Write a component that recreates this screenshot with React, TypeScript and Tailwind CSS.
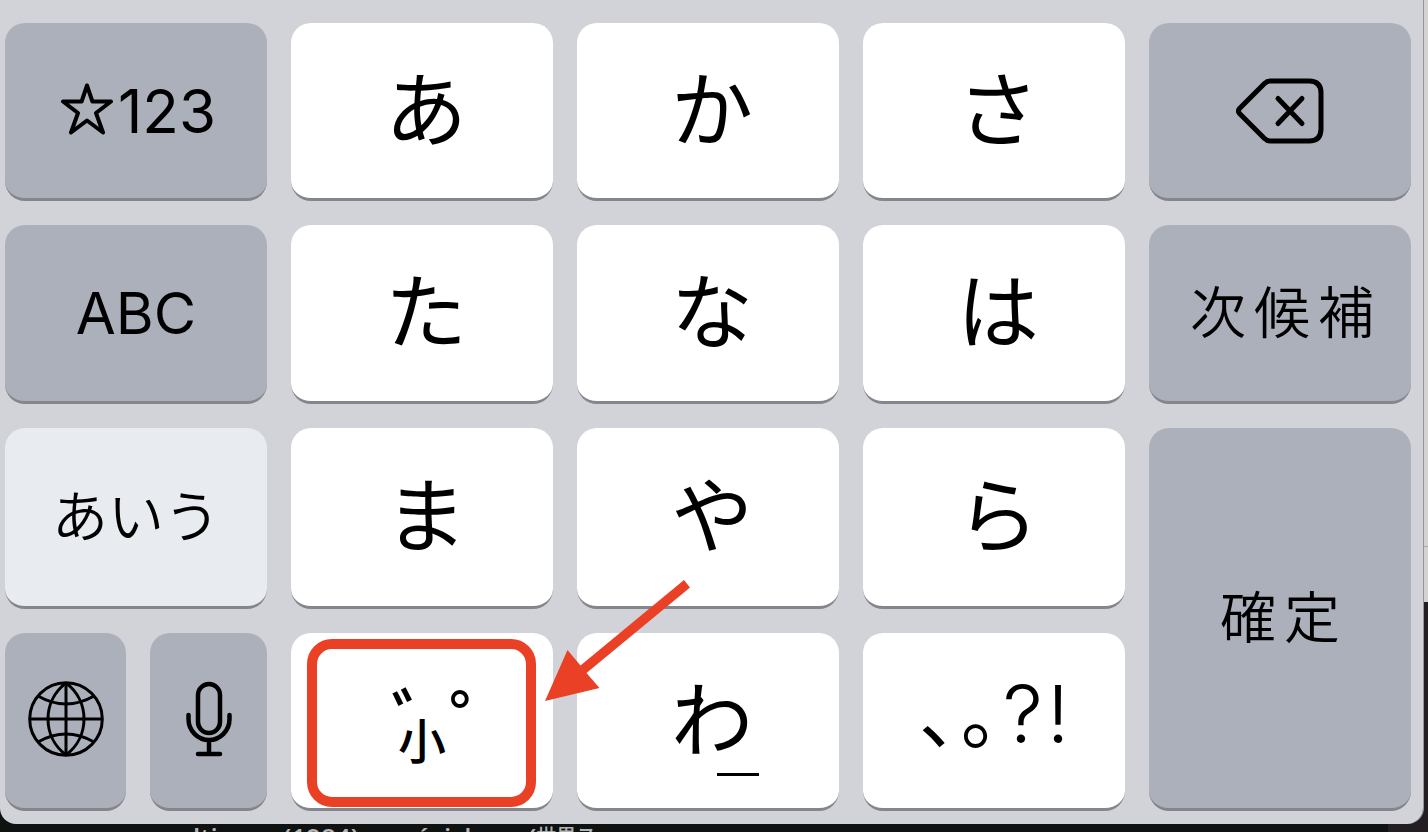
import type { ReactNode } from "react";

type KeyProps = {
  label: string;
  tone?: "white" | "gray" | "pale";
  className?: string;
  children: ReactNode;
};

const tones = {
  white: "bg-white",
  gray: "bg-[#acb0bb]",
  pale: "bg-[#e8ebf0]",
};

function Key({ label, tone = "white", className = "", children }: KeyProps) {
  return (
    <button
      type="button"
      aria-label={label}
      className={`flex min-w-0 items-center justify-center rounded-[20px] border-b-3 border-[#85868b] text-black ${tones[tone]} ${className}`}
    >
      {children}
    </button>
  );
}

function Kana({ char }: { char: string }) {
  return (
    <Key label={char}>
      <span className="pb-3 pl-2 text-[82px] leading-none">{char}</span>
    </Key>
  );
}

function StarIcon() {
  return (
    <svg viewBox="0 0 54 52" className="mb-1 h-[52px] w-[54px]" fill="none" stroke="currentColor" strokeWidth="4" strokeLinejoin="round" aria-hidden="true">
      <path d="M27 2.500 L32.400 18.500 H51 L36 30 L43 49.500 L27 37.500 L11 49.500 L18 30 L3 18.500 H21.600 Z" />
    </svg>
  );
}

function DeleteIcon() {
  return (
    <svg viewBox="0 0 88 66" className="h-[66px] w-[88px]" fill="none" stroke="currentColor" strokeLinecap="round" strokeLinejoin="round" aria-hidden="true">
      <path d="M34 3 H73 Q85 3 85 15 V51 Q85 63 73 63 H34 Q31 63 28.500 60.500 L3.500 35.500 Q1.500 33 3.500 30.500 L28.500 5.500 Q31 3 34 3 Z" strokeWidth="5" />
      <path d="M42 20.500 L66 45.500 M66 20.500 L42 45.500" strokeWidth="5" />
    </svg>
  );
}

function GlobeIcon() {
  return (
    <svg viewBox="0 0 76 76" className="mb-1 h-[76px] w-[76px]" fill="none" stroke="currentColor" strokeWidth="3" aria-hidden="true">
      <circle cx="38" cy="38" r="36.300" />
      <path d="M38 2 V74 M2 38 H74" />
      <path d="M38 2 C14 20 14 56 38 74 M38 2 C62 20 62 56 38 74" />
      <path d="M10 15 Q38 31 66 15 M10 61 Q38 45 66 61" />
    </svg>
  );
}

function MicIcon() {
  return (
    <svg viewBox="0 0 46 76" className="mb-1 h-[76px] w-[46px]" fill="none" stroke="currentColor" strokeWidth="4.500" strokeLinecap="round" aria-hidden="true">
      <rect x="12" y="3" width="22" height="49" rx="11" />
      <path d="M2.500 34 V38 A20.500 21 0 0 0 43.500 38 V34 M23 60 V73 M12 73 H34" />
    </svg>
  );
}

function Keyboard() {
  return (
    <div className="relative grid grid-cols-5 grid-rows-[178px_179px_181px_178px] gap-6 rounded-b-2xl bg-[#d2d3d9] pt-[23px] pr-[12px] pb-[13px] pl-[5px]">
      <Key label="記号と数字" tone="gray" className="gap-1 pl-1">
        <StarIcon />
        <span className="font-['Inter'] text-[60px] leading-none">123</span>
      </Key>
      <Kana char="あ" />
      <Kana char="か" />
      <Kana char="さ" />
      <Key label="削除" tone="gray">
        <DeleteIcon />
      </Key>

      <Key label="ABC" tone="gray">
        <span className="font-['Inter'] text-[58px] leading-none">ABC</span>
      </Key>
      <Kana char="た" />
      <Kana char="な" />
      <Kana char="は" />
      <Key label="次候補" tone="gray">
        <span className="flex gap-2 pb-2 pl-1 text-[56px] leading-none font-[350]">
          <span>次</span>
          <span>候</span>
          <span>補</span>
        </span>
      </Key>

      <Key label="あいう" tone="pale">
        <span className="pb-2 text-[56px] leading-none font-[350]">あいう</span>
      </Key>
      <Kana char="ま" />
      <Kana char="や" />
      <Kana char="ら" />
      <Key label="確定" tone="gray" className="row-span-2">
        <span className="flex gap-2 pb-2 text-[56px] leading-none font-[350]">
          <span>確</span>
          <span>定</span>
        </span>
      </Key>

      <div className="flex gap-6">
        <Key label="次のキーボード" tone="gray" className="w-[121px] grow">
          <GlobeIcon />
        </Key>
        <Key label="音声入力" tone="gray" className="w-[117px] grow">
          <MicIcon />
        </Key>
      </div>
      <div className="relative flex">
        <Key label="濁点、半濁点、小文字" className="grow flex-col">
          <span className="flex h-[34px] w-full gap-5 pt-[2px] pl-[100px] text-[76px] leading-none font-medium">
            <span>ﾞ</span>
            <span>゜</span>
          </span>
          <span className="text-[48px] leading-none font-medium">小</span>
        </Key>
        <div className="pointer-events-none absolute top-[6px] right-[17px] bottom-[4px] left-[16px] rounded-[25px] border-10 border-[#ea4025]" />
        <svg viewBox="0 0 146 122" className="pointer-events-none absolute -top-[54px] left-[254px] z-10 h-[122px] w-[146px]" fill="#ea4025" aria-hidden="true">
          <path d="M0 122 L22.500 71 L35.500 86.500 L139 1 L145 8.500 L41.500 94 L54.500 109 Z" />
        </svg>
      </div>
      <Key label="わ">
        <span className="relative pb-3 pl-2 text-[82px] leading-none">
          わ
          <span className="absolute -bottom-2 left-[54px] h-[3px] w-[42px] bg-black" />
        </span>
      </Key>
      <Key label="句読点と記号">
        <span className="flex items-baseline gap-1 pb-4 text-[76px] leading-none">
          <span className="[font-feature-settings:'halt']">、</span>
          <span className="[font-feature-settings:'halt']">。</span>
          <span className="font-['Inter'] text-[80px] font-light">?</span>
          <span className="font-['Inter'] text-[80px] font-light">!</span>
        </span>
      </Key>
    </div>
  );
}

export default function App() {
  return (
    <main className="relative flex h-screen flex-col overflow-hidden bg-[#0e1210] font-['Noto_Sans_CJK_JP',sans-serif]">
      <div className="absolute top-0 right-0 flex h-full w-10 flex-col bg-[#231e22]">
        <div className="h-[547px] border-b border-[#a9a9a9] bg-[#d4d3d1]" />
        <div className="h-[55px] bg-[#d4d3d1]" />
      </div>
      <div className="relative mr-[4px] rounded-b-2xl border-r border-[#96969a]">
        <Keyboard />
      </div>
      <p className="relative flex h-2 overflow-hidden pt-[2px] pl-[193px] font-['Open_Sans','Noto_Sans_CJK_JP',sans-serif] text-[26px] leading-[22px] font-semibold whitespace-nowrap text-[#b4b4b4]">
        <span className="w-[90px]">ltimos</span>
        <span className="w-[107px]">(1984)</span>
        <span className="w-[138px]">músicka</span>
        <span>(</span>
        <span className="text-[20px] leading-[22px] font-medium">世界ス</span>
      </p>
    </main>
  );
}
